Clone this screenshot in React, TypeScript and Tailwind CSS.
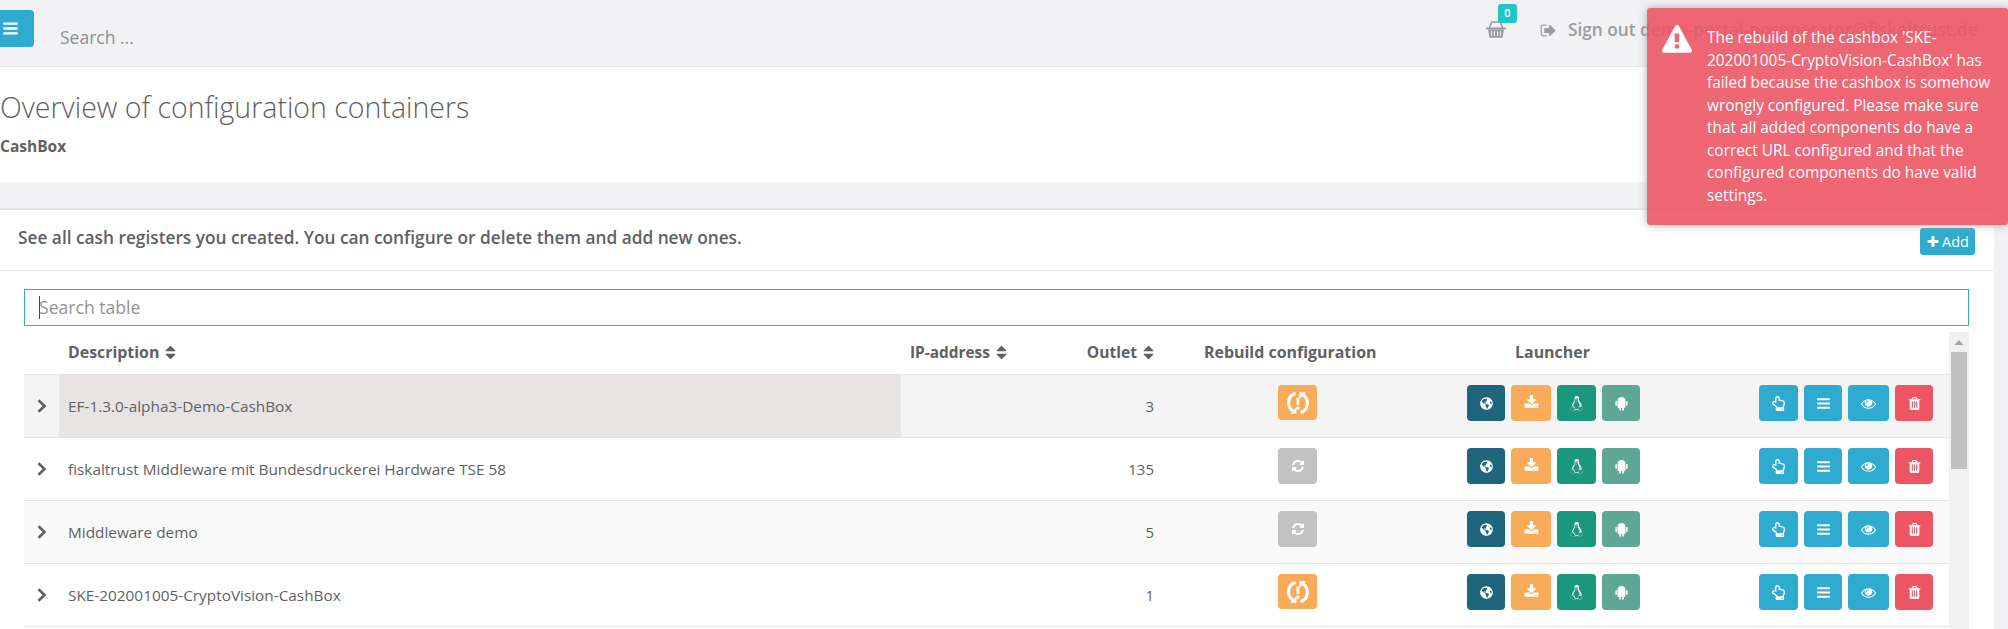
import React from 'react';
import { FaLinux, FaRegHandPointUp, FaGlobeAmericas } from 'react-icons/fa';

const PATHS = {
  bars: 'M1664 1344v128q0 26-19 45t-45 19h-1408q-26 0-45-19t-19-45v-128q0-26 19-45t45-19h1408q26 0 45 19t19 45zm0-512v128q0 26-19 45t-45 19h-1408q-26 0-45-19t-19-45v-128q0-26 19-45t45-19h1408q26 0 45 19t19 45zm0-512v128q0 26-19 45t-45 19h-1408q-26 0-45-19t-19-45v-128q0-26 19-45t45-19h1408q26 0 45 19t19 45z',
  download: 'M1344 1344q0-26-19-45t-45-19-45 19-19 45 19 45 45 19 45-19 19-45zm256 0q0-26-19-45t-45-19-45 19-19 45 19 45 45 19 45-19 19-45zm128-224v320q0 40-28 68t-68 28h-1472q-40 0-68-28t-28-68v-320q0-40 28-68t68-28h465l135 136q58 56 136 56t136-56l136-136h464q40 0 68 28t28 68zm-325-569q17 41-14 70l-448 448q-18 19-45 19t-45-19l-448-448q-31-29-14-70 17-39 59-39h256v-448q0-26 19-45t45-19h256q26 0 45 19t19 45v448h256q42 0 59 39z',
  refresh: 'M1639 1056q0 5-1 7-64 268-268 434.5t-478 166.5q-146 0-282.5-55t-243.5-157l-129 129q-19 19-45 19t-45-19-19-45v-448q0-26 19-45t45-19h448q26 0 45 19t19 45-19 45l-137 137q71 66 161 102t187 36q134 0 250-65t186-179q11-17 53-117 8-23 30-23h192q13 0 22.5 9.5t9.5 22.5zm25-800v448q0 26-19 45t-45 19h-448q-26 0-45-19t-19-45 19-45l138-138q-148-137-349-137-134 0-250 65t-186 179q-11 17-53 117-8 23-30 23h-199q-13 0-22.5-9.5t-9.5-22.5v-7q65-268 270-434.5t480-166.5q146 0 284 55.5t245 156.5l130-129q19-19 45-19t45 19 19 45z',
  sort: 'M1408 1088q0 26-19 45l-448 448q-19 19-45 19t-45-19l-448-448q-19-19-19-45t19-45 45-19h896q26 0 45 19t19 45zm0-384q0 26-19 45t-45 19h-896q-26 0-45-19t-19-45 19-45l448-448q19-19 45-19t45 19l448 448q19 19 19 45z',
  trash: 'M704 1376v-704q0-14-9-23t-23-9h-64q-14 0-23 9t-9 23v704q0 14 9 23t23 9h64q14 0 23-9t9-23zm256 0v-704q0-14-9-23t-23-9h-64q-14 0-23 9t-9 23v704q0 14 9 23t23 9h64q14 0 23-9t9-23zm256 0v-704q0-14-9-23t-23-9h-64q-14 0-23 9t-9 23v704q0 14 9 23t23 9h64q14 0 23-9t9-23zm-544-992h448l-48-117q-7-9-17-11h-317q-10 2-17 11zm928 32v64q0 14-9 23t-23 9h-96v948q0 83-47 143.5t-113 60.5h-832q-66 0-113-58.5t-47-141.5v-952h-96q-14 0-23-9t-9-23v-64q0-14 9-23t23-9h309l70-167q15-37 54-63t79-26h320q40 0 79 26t54 63l70 167h309q14 0 23 9t9 23z',
  plus: 'M1600 736v192q0 40-28 68t-68 28h-416v416q0 40-28 68t-68 28h-192q-40 0-68-28t-28-68v-416h-416q-40 0-68-28t-28-68v-192q0-40 28-68t68-28h416v-416q0-40 28-68t68-28h192q40 0 68 28t28 68v416h416q40 0 68 28t28 68z',
  warning: 'M1024 1375v-190q0-14-9.5-23.5t-22.5-9.5h-192q-13 0-22.5 9.5t-9.5 23.5v190q0 14 9.5 23.5t22.5 9.5h192q13 0 22.5-9.5t9.5-23.5zm-2-374l18-459q0-12-10-19-13-11-24-11h-220q-11 0-24 11-10 7-10 21l17 457q0 10 10 16.5t24 6.5h185q14 0 23.5-6.5t10.5-16.5zm-14-934l768 1408q35 63-2 126-17 29-46.5 46t-63.5 17h-1536q-34 0-63.5-17t-46.5-46q-37-63-2-126l768-1408q17-31 47-49t65-18 65 18 47 49z',
  signOut: 'M704 1440q0 4 1 20t.5 26.5-3 23.5-10 19.5-20.5 6.5h-320q-119 0-203.5-84.5t-84.5-203.5v-704q0-119 84.5-203.5t203.5-84.5h320q13 0 22.5 9.5t9.5 22.5q0 4 1 20t.5 26.5-3 23.5-10 19.5-20.5 6.5h-320q-66 0-113 47t-47 113v704q0 66 47 113t113 47h312l11.5 1 11.5 3 8 5.5 7 9 2 13.5zm928-544q0 26-19 45l-544 544q-19 19-45 19t-45-19-19-45v-288h-448q-26 0-45-19t-19-45v-384q0-26 19-45t45-19h448v-288q0-26 19-45t45-19 45 19l544 544q19 19 19 45z',
  eye: 'M1664 960q-152-236-381-353 61 104 61 225 0 185-131.5 316.5t-316.5 131.5-316.5-131.5-131.5-316.5q0-121 61-225-229 117-381 353 133 205 333.5 326.5t434.5 121.5 434.5-121.5 333.5-326.5zm-720-384q0-20-14-34t-34-14q-125 0-214.5 89.5t-89.5 214.5q0 20 14 34t34 14 34-14 14-34q0-86 61-147t147-61q20 0 34-14t14-34zm848 384q0 34-20 69-140 230-376.5 368.5t-499.5 138.5-499.5-139-376.5-368q-20-35-20-69t20-69q140-229 376.5-368t499.5-139 499.5 139 376.5 368q20 35 20 69z',
};

function Icon({ name, className }: { name: keyof typeof PATHS; className: string }) {
  return (
    <svg viewBox="0 0 1792 1792" fill="currentColor" className={`shrink-0 ${className}`}>
      <path d={PATHS[name]} />
    </svg>
  );
}

function Basket() {
  return (
    <svg viewBox="0 0 20 17" className="h-[17px] w-5" fill="none" stroke="currentColor">
      <path d="M3.5 7 5 2.2Q5.4 1 6.6 1h6.8q1.2 0 1.6 1.2L16.5 7" strokeWidth="1.5" />
      <path d="M1 7.5h18" strokeWidth="2.2" strokeLinecap="round" />
      <path
        fill="currentColor"
        stroke="none"
        fillRule="evenodd"
        d="M2 8.5h16l-1.2 7.3q-.2 1-1.2 1H4.4q-1 0-1.2-1zM4.7 10.2l.4 4.8h1.1l-.4-4.8zM7.8 10.2v4.8h1.2v-4.8zM11 10.2v4.8h1.2v-4.8zM14.2 10.2l-.4 4.8h1.1l.4-4.8z"
      />
    </svg>
  );
}

function SyncProblem() {
  return (
    <svg viewBox="0 0 22 22" className="size-[22px]" fill="none" stroke="currentColor" strokeWidth="3">
      <path d="M8.5 1.5C4 2.600 1.600 6.500 1.600 11c0 3.500 1.700 6.300 4.200 8" />
      <path d="M13.500 20.500C18 19.400 20.400 15.500 20.400 11c0-3.500-1.700-6.300-4.200-8" />
      <path d="M3 21.800h6.500v-6.500zM19 .2h-6.500v6.500z" fill="currentColor" stroke="none" />
      <path d="M11 5.500v7.500M11 14.600v2.900" strokeWidth="2.800" />
    </svg>
  );
}

function Android() {
  return (
    <svg viewBox="0 0 14 14" className="size-[15px]" fill="currentColor">
      <path d="M3.300 4.400C3.400 2.300 4.800 1 7 1s3.600 1.300 3.700 3.400v5.800q0 .9-.9.900h-.6v2q0 .7-.8.700t-.8-.7v-2H6.500v2q0 .7-.8.700t-.8-.7v-2h-.7q-.9 0-.9-.9z" />
      <path d="M2 4.700q.7 0 .7.700v3.300q0 .7-.7.700t-.7-.7V5.400q0-.7.7-.7zM12 4.700q.7 0 .7.700v3.300q0 .7-.7.700t-.7-.7V5.400q0-.7.7-.7z" />
    </svg>
  );
}

function Chevron() {
  return (
    <svg viewBox="0 0 10 14" className="h-[14px] w-[10px]" fill="none" stroke="currentColor" strokeWidth="2.600">
      <path d="M1.500 1.300 7.500 7l-6 5.700" />
    </svg>
  );
}

function Btn({ className, children }: { className: string; children: React.ReactNode }) {
  return (
    <button className={`flex shrink-0 items-center justify-center rounded-[4px] text-white ${className}`}>
      {children}
    </button>
  );
}

const COLS = 'grid grid-cols-[35px_842px_160px_104px_250px_285px_249px]';

const ROWS = [
  { name: 'EF-1.3.0-alpha3-Demo-CashBox', outlet: '3', stale: true, bg: 'bg-[#f4f4f4]', cell: 'bg-[#e7e4e3]' },
  { name: 'fiskaltrust Middleware mit Bundesdruckerei Hardware TSE 58', outlet: '135', stale: false, bg: 'bg-white', cell: '' },
  { name: 'Middleware demo', outlet: '5', stale: false, bg: 'bg-[#f9f9f9]', cell: '' },
  { name: 'SKE-202001005-CryptoVision-CashBox', outlet: '1', stale: true, bg: 'bg-white', cell: '' },
];

function Row({ row }: { row: (typeof ROWS)[number] }) {
  return (
    <div className={`${COLS} h-[63px] border-t border-[#e4e5e7] ${row.bg}`}>
      <div className="flex items-center pl-[13px]">
        <Chevron />
      </div>
      <div className={`flex items-center pl-[9px] pt-[2px] text-[15.35px] ${row.cell}`}>{row.name}</div>
      <div />
      <div className="flex items-center justify-end pr-[11px] text-[15px]">{row.outlet}</div>
      <div className="flex justify-start pl-[113px] pt-[10px]">
        {row.stale ? (
          <Btn className="h-[35px] w-[39px] bg-[#f8ac59]">
            <SyncProblem />
          </Btn>
        ) : (
          <Btn className="h-9 w-[39px] bg-[#c2c2c2]">
            <Icon name="refresh" className="size-[14px]" />
          </Btn>
        )}
      </div>
      <div className="flex gap-[6px] pl-[52px] pt-[10px]">
        <Btn className="h-9 w-[38px] bg-[#1f667d]">
          <FaGlobeAmericas className="size-[13px]" />
        </Btn>
        <Btn className="h-9 w-10 bg-[#f8ac59]">
          <Icon name="download" className="mb-0.5 size-[15px]" />
        </Btn>
        <Btn className="h-9 w-[39px] bg-[#1a987c]">
          <FaLinux className="size-[15px]" />
        </Btn>
        <Btn className="h-9 w-[38px] bg-[#5ea797]">
          <Android />
        </Btn>
      </div>
      <div className="flex gap-[6px] pl-[59px] pt-[10px]">
        <Btn className="h-9 w-[39px] bg-[#2fabd0]">
          <FaRegHandPointUp className="size-[15px]" />
        </Btn>
        <Btn className="h-9 w-[38px] bg-[#2fabd0]">
          <Icon name="bars" className="size-[15px]" />
        </Btn>
        <Btn className="h-9 w-[41px] bg-[#2fabd0]">
          <Icon name="eye" className="size-[15px]" />
        </Btn>
        <Btn className="h-9 w-[38px] bg-[#ed5565]">
          <Icon name="trash" className="size-[15px]" />
        </Btn>
      </div>
    </div>
  );
}

export default function App() {
  return (
    <div className="relative h-[629px] w-[2008px] overflow-hidden bg-[#f2f2f4] font-['Open_Sans',sans-serif] text-[15.4px] text-[#5f6163]">
      <header className="flex h-[67px] border-b border-[#e3e6e9]">
        <button className="mt-[10px] flex h-[37px] w-[34px] items-center rounded-r-[4px] bg-[#2fabd0] pl-[2px] text-white">
          <Icon name="bars" className="size-[17px]" />
        </button>
        <div className="ml-[26px] mt-[25px] w-[1400px] text-[17.5px] leading-6 text-[#8e8f90]">Search ...</div>
        <div className="relative ml-[26px] mt-[21px] w-[50px] text-[#999c9e]">
          <Basket />
          <span className="absolute left-[12px] top-[-17px] flex h-[19px] w-[19px] items-center justify-center rounded-[3px] bg-[#23c6c8] text-[11px] font-semibold text-white">
            0
          </span>
        </div>
        <div className="ml-[4px] mt-[18px] flex h-6 items-center whitespace-nowrap text-[17.25px] font-semibold text-[#999c9e]">
          <Icon name="signOut" className="size-[17px]" />
          <span className="ml-[11px]">Sign out demo-portal-posoperator@fiskaltrust.de</span>
        </div>
      </header>

      <section className="h-[115px] bg-white">
        <h1 className="pt-[21px] text-[28.5px] font-light leading-[38px]">Overview of configuration containers</h1>
        <div className="mt-[10px] text-[15.5px] font-bold leading-[20px]">CashBox</div>
      </section>

      <section className="mt-[26px] w-[1994px] border-t-2 border-[#e3e6e9] bg-white">
        <div className="flex h-[61px] justify-between border-b border-[#e7eaec] pl-[18px] pr-[19px]">
          <h2 className="pt-[16px] text-[17.27px] font-semibold leading-6">
            See all cash registers you created. You can configure or delete them and add new ones.
          </h2>
          <button className="mt-[18px] flex h-[27px] w-[55px] items-center justify-center gap-[2px] rounded-[3px] bg-[#2fabd0] text-[14.5px] text-white">
            <Icon name="plus" className="size-[14px]" />
            Add
          </button>
        </div>
        <div className="h-[358px] pl-6 pr-[25px] pt-[18px]">
          <div className="flex h-[37px] items-center border border-[#35a9cb] pl-[14px] text-[17.6px] text-[#939495]">
            <span className="-mr-px h-[23px] w-px bg-[#444]" />
            Search table
          </div>
          <div className="mt-[6px] flex">
            <div className="w-[1925px]">
              <div className={`${COLS} h-[42px] items-center font-bold`}>
                <div />
                <div className="flex items-center pl-[9px] text-[15.9px]">
                  Description
                  <Icon name="sort" className="ml-[3px] size-[17px]" />
                </div>
                <div className="flex items-center pl-[9px]">
                  IP-address
                  <Icon name="sort" className="ml-[3px] size-[17px]" />
                </div>
                <div className="flex items-center justify-end pr-[8px] text-[15.6px]">
                  Outlet
                  <Icon name="sort" className="ml-[3px] size-[17px]" />
                </div>
                <div className="pl-[39px] text-[15.95px]">Rebuild configuration</div>
                <div className="pl-[100px] text-[15.95px]">Launcher</div>
                <div />
              </div>
              {ROWS.map((row) => (
                <Row key={row.name} row={row} />
              ))}
              <div className="h-[3px] border-t border-[#e4e5e7] bg-[#f9f9f9]" />
            </div>
            <div className="flex h-[297px] w-5 flex-col items-center bg-[#f1f1f1]">
              <svg viewBox="0 0 20 20" className="size-5" fill="#a3a3a3">
                <path d="M5.500 13h9L10 8z" />
              </svg>
              <div className="h-[117px] w-4 bg-[#c1c1c1]" />
            </div>
          </div>
        </div>
      </section>

      <aside className="absolute left-[1647px] top-[8px] flex h-[217px] w-[361px] rounded-[3px] bg-[#ed5565]/90 text-white shadow-[0_0_8px_#aaa]">
        <Icon name="warning" className="ml-[15px] mt-[17px] size-[30px]" />
        <p className="ml-[15px] whitespace-pre pt-[19px] text-[15.4px] leading-[22.5px]">
          {`The rebuild of the cashbox 'SKE-
202001005-CryptoVision-CashBox' has
failed because the cashbox is somehow
wrongly configured. Please make sure
that all added components do have a
correct URL configured and that the
configured components do have valid
settings.`}
        </p>
      </aside>
    </div>
  );
}
